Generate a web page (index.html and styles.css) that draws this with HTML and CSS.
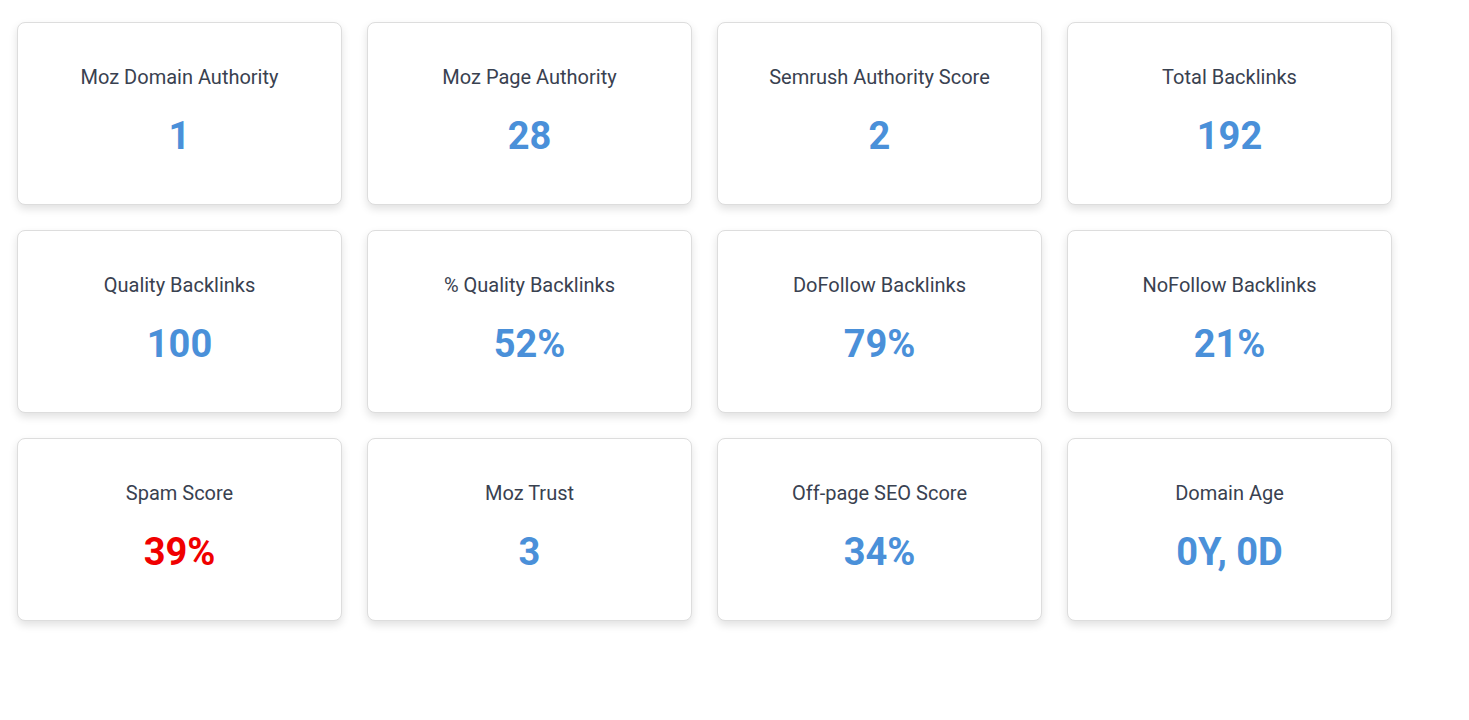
FILE: index.html
```html
<!DOCTYPE html>
<html lang="en">
<head>
<meta charset="utf-8">
<title>SEO Metrics</title>
<link rel="stylesheet" href="styles.css">
</head>
<body>
<div class="grid">
  <div class="card"><div class="label">Moz Domain Authority</div><div class="value">1</div></div>
  <div class="card"><div class="label">Moz Page Authority</div><div class="value">28</div></div>
  <div class="card"><div class="label">Semrush Authority Score</div><div class="value">2</div></div>
  <div class="card"><div class="label">Total Backlinks</div><div class="value">192</div></div>
  <div class="card"><div class="label">Quality Backlinks</div><div class="value">100</div></div>
  <div class="card"><div class="label">% Quality Backlinks</div><div class="value">52%</div></div>
  <div class="card"><div class="label">DoFollow Backlinks</div><div class="value">79%</div></div>
  <div class="card"><div class="label">NoFollow Backlinks</div><div class="value">21%</div></div>
  <div class="card"><div class="label">Spam Score</div><div class="value value-bad">39%</div></div>
  <div class="card"><div class="label">Moz Trust</div><div class="value">3</div></div>
  <div class="card"><div class="label">Off-page SEO Score</div><div class="value">34%</div></div>
  <div class="card"><div class="label">Domain Age</div><div class="value">0Y, 0D</div></div>
</div>
</body>
</html>
```
FILE: styles.css
```css
html, body {
  margin: 0;
  padding: 0;
  background: #ffffff;
}
body {
  font-family: Roboto, "Liberation Sans", Arial, sans-serif;
  min-height: 720px;
}
.grid {
  display: grid;
  grid-template-columns: repeat(4, 325px);
  grid-auto-rows: 183px;
  gap: 25px;
  padding: 22px 0 60px 17px;
}
.card {
  box-sizing: border-box;
  border: 1px solid #dddddd;
  border-radius: 8px;
  background: #fff;
  box-shadow: 0 4px 8px rgba(0, 0, 0, 0.12);
  display: flex;
  flex-direction: column;
  align-items: center;
  justify-content: center;
  gap: 25px;
  padding-bottom: 4px;
  text-align: center;
}
.label {
  font-size: 20px;
  color: #394150;
  line-height: 24px;
}
.value {
  font-size: 38px;
  font-weight: 700;
  color: #4a90d9;
  line-height: 44px;
}
.value-bad {
  color: #f00000;
}
```
